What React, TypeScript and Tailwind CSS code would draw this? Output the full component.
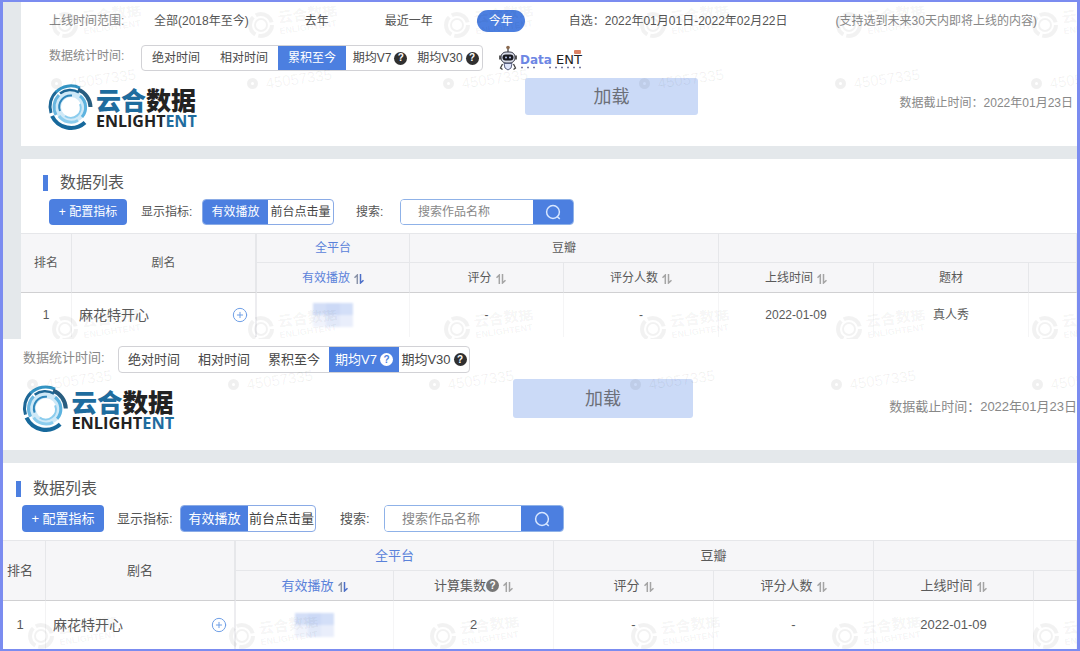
import { useState } from "react";
import { CirclePlus } from "lucide-react";

type Size = "sm" | "lg";

interface Column {
  label: string;
  width: string;
  value: string;
  active?: boolean;
  help?: boolean;
  sortable?: boolean;
  masked?: boolean;
}

interface Group {
  label: string;
  span: number;
  active?: boolean;
}

const RANGES = ["全部(2018年至今)", "去年", "最近一年", "今年"];

const PERIODS = [
  { label: "绝对时间", help: false },
  { label: "相对时间", help: false },
  { label: "累积至今", help: false },
  { label: "期均V7", help: true },
  { label: "期均V30", help: true },
];

const METRICS = ["有效播放", "前台点击量"];

const TOTAL_GROUPS: Group[] = [
  { label: "全平台", span: 1, active: true },
  { label: "豆瓣", span: 2 },
  { label: "", span: 3 },
];

const TOTAL_COLUMNS: Column[] = [
  { label: "有效播放", width: "w-[153px]", value: "", active: true, sortable: true, masked: true },
  { label: "评分", width: "w-[154px]", value: "-", sortable: true },
  { label: "评分人数", width: "w-[155px]", value: "-", sortable: true },
  { label: "上线时间", width: "w-[155px]", value: "2022-01-09", sortable: true },
  { label: "题材", width: "w-[155px]", value: "真人秀" },
  { label: "", width: "", value: "" },
];

const AVERAGE_GROUPS: Group[] = [
  { label: "全平台", span: 2, active: true },
  { label: "豆瓣", span: 2 },
  { label: "", span: 2 },
];

const AVERAGE_COLUMNS: Column[] = [
  { label: "有效播放", width: "w-[158px]", value: "", active: true, sortable: true, masked: true },
  { label: "计算集数", width: "w-[160px]", value: "2", help: true, sortable: true },
  { label: "评分", width: "w-[160px]", value: "-", sortable: true },
  { label: "评分人数", width: "w-[160px]", value: "-", sortable: true },
  { label: "上线时间", width: "w-[160px]", value: "2022-01-09", sortable: true },
  { label: "", width: "", value: "" },
];

function HelpDot({ tone }: { tone: "dark" | "light" | "gray" }) {
  const map = {
    dark: "bg-[#303030] text-white",
    light: "bg-white text-[#4c7fe0]",
    gray: "bg-[#777] text-white",
  };
  return (
    <span className={`inline-flex h-[13px] w-[13px] shrink-0 items-center justify-center rounded-full text-[10px] leading-none font-bold ${map[tone]}`}>
      ?
    </span>
  );
}

function SortIcon({ active }: { active?: boolean }) {
  return (
    <svg className="mt-0.5 h-[10px] w-[10px] shrink-0" viewBox="0 0 10 10" fill="none" strokeWidth="1.5">
      <path d="M.5 3.8 3.3 1V10" stroke={active ? "#8a93a8" : "#a5a5a5"} />
      <path d="M6.5 0V9L9.5 6.2" stroke={active ? "#4c6fc8" : "#a5a5a5"} />
    </svg>
  );
}

function BrandLogo({ className }: { className: string }) {
  return (
    <svg className={`shrink-0 overflow-visible ${className}`} viewBox="0 0 147 47" role="img" aria-label="云合数据 ENLIGHTENT">
      <g fill="none">
        <circle cx="22" cy="23" r="13" stroke="#cfe9f7" strokeWidth="6" />
        <path d="M7.5 7.5A21 21 0 0 0 2 29" stroke="#1d6796" strokeWidth="3" />
        <path d="M3 32A21 21 0 0 0 36 38.5" stroke="#17699c" strokeWidth="4" />
        <path d="M7 8A21 21 0 0 1 31 4" stroke="#3394c4" strokeWidth="3" />
        <path d="M29 5.5A19.5 19.5 0 0 1 41.5 23" stroke="#285d80" strokeWidth="4" />
        <path d="M10 11A17 17 0 0 0 7 31" stroke="#69b6df" strokeWidth="3" />
        <path d="M11 9.5A17 17 0 0 1 30 8.5" stroke="#1d6796" strokeWidth="2.5" />
        <path d="M31 12A14.5 14.5 0 0 1 33 33" stroke="#5db3df" strokeWidth="3" />
        <path d="M10 32A15 15 0 0 0 29 36.5" stroke="#8ccdee" strokeWidth="3" />
        <path d="M11 27A11.5 11.5 0 0 1 23 11.5" stroke="#2e86bb" strokeWidth="2" />
        <path d="M31 20A10 10 0 0 1 16 32" stroke="#8ccdee" strokeWidth="2" />
      </g>
      <text x="47" y="26" className="font-['Noto_Sans_CJK_SC',sans-serif] text-[25px] font-black" fill="#1f6c9e">
        云合<tspan fill="#222">数据</tspan>
      </text>
      <text x="47" y="43" className="font-['Open_Sans',sans-serif] text-[16px] font-bold" fill="#222">
        ENLIGHT<tspan fill="#1f6c9e">ENT</tspan>
      </text>
    </svg>
  );
}

function DataEntLogo() {
  return (
    <svg className="ml-4 h-[26px] w-[86px] shrink-0" viewBox="0 0 86 26" role="img" aria-label="Data ENT">
      <path d="M9 3v5" stroke="#333" strokeWidth="1.2" />
      <circle cx="9" cy="2.5" r="1.8" fill="#8b6a50" />
      <rect x="2" y="7" width="14" height="11" rx="5" fill="#d7dbe8" stroke="#3a3d4a" />
      <rect x="3.5" y="9.5" width="11" height="6" rx="3" fill="#17191f" />
      <circle cx="7" cy="12.5" r="1" fill="#b9c6ef" />
      <circle cx="11" cy="12.5" r="1" fill="#b9c6ef" />
      <path d="M1 10.5v4M17 10.5v4" stroke="#333" strokeWidth="1.6" />
      <path d="M5 18.5h8l-1 4.5-3 2-3-2z" fill="#dfe6fa" stroke="#596080" />
      <path d="M3.5 19 1.5 23l2 1.5M14.5 19l2 4-2 1.5" fill="none" stroke="#444" strokeWidth="1.3" />
      <text x="21" y="19" className="font-['DejaVu_Sans',sans-serif] text-[12px] font-bold" fill="#6d86e4">Data</text>
      <text x="57" y="19" className="font-['DejaVu_Sans',sans-serif] text-[13px]" fill="#222">ENT</text>
      <rect x="75" y="5" width="7" height="4" rx="1" fill="#dd8264" />
      <path d="M22 22.5h18M50 22.5h32" stroke="#7779a0" strokeWidth="1.5" strokeDasharray="2 4" />
    </svg>
  );
}

function LogoMark({ size }: { size: Size }) {
  return (
    <div className={`flex shrink-0 items-center text-black/5 ${size === "sm" ? "w-[196px]" : "w-[201px]"}`}>
      <svg className="h-7 w-7" viewBox="0 0 28 28" fill="none" stroke="currentColor">
        <circle cx="14" cy="14" r="11" strokeWidth="4" strokeDasharray="20 3" />
        <circle cx="14" cy="14" r="6" strokeWidth="2" />
      </svg>
      <div className="ml-1 -rotate-8 pb-3 leading-none font-bold">
        <p className="text-[15px] leading-4">云合数据</p>
        <p className="text-[9px] leading-[10px]">ENLIGHTENT</p>
      </div>
    </div>
  );
}

function NumberMark({ size }: { size: Size }) {
  return (
    <div className={`flex shrink-0 items-center gap-2 text-black/6 ${size === "sm" ? "w-[196px]" : "w-[201px]"}`}>
      <span className="h-[11px] w-[11px] rounded-full border-4 border-current" />
      <span className="-rotate-8 pb-2 text-[15px]">45057335</span>
    </div>
  );
}

function WatermarkRow({ kind, size, className }: { kind: "logo" | "number"; size: Size; className: string }) {
  return (
    <div aria-hidden="true" className={`pointer-events-none absolute right-0 flex overflow-hidden select-none ${className}`}>
      {[0, 1, 2, 3, 4, 5].map((i) =>
        kind === "logo" ? <LogoMark key={i} size={size} /> : <NumberMark key={i} size={size} />
      )}
    </div>
  );
}

function PeriodPicker({ size, initial, children }: { size: Size; initial: string; children?: React.ReactNode }) {
  const [period, setPeriod] = useState(initial);
  const sm = size === "sm";
  return (
    <div className={`flex items-center ${sm ? "h-[26px] text-xs" : "h-[27px] text-[13px]"}`}>
      <span className={`shrink-0 pb-1 text-[#888] ${sm ? "w-[92px]" : "w-[95px]"}`}>数据统计时间:</span>
      <div className="flex h-full overflow-hidden rounded-[4px] border border-[#d2d2d6]">
        {PERIODS.map((p) => {
          const on = p.label === period;
          return (
            <button
              key={p.label}
              type="button"
              aria-pressed={on}
              onClick={() => setPeriod(p.label)}
              className={`flex items-center justify-center gap-[3px] whitespace-nowrap ${sm ? "w-[68px]" : "w-[70px]"} ${on ? "bg-[#4c7fe0] text-white" : "text-[#484848]"}`}
            >
              {p.label}
              {p.help && <HelpDot tone={on ? "light" : "dark"} />}
            </button>
          );
        })}
      </div>
      {children}
    </div>
  );
}

function Toolbar({ size }: { size: Size }) {
  const [metric, setMetric] = useState(METRICS[0]);
  const sm = size === "sm";
  const inputId = `search-${size}`;
  return (
    <div className={`flex items-center text-[#555] ${sm ? "h-[26px] pl-7 text-xs" : "h-[27px] pl-[19px] text-[13px]"}`}>
      <button type="button" className={`h-full shrink-0 rounded-[4px] bg-[#4c7fe0] text-white ${sm ? "w-[78px]" : "w-[82px]"}`}>
        + 配置指标
      </button>
      <span className={`shrink-0 ${sm ? "ml-3.5 w-[61px]" : "ml-[13px] w-[63px]"}`}>显示指标:</span>
      <div className="flex h-full overflow-hidden rounded-[4px] border border-[#8aabe6]">
        {METRICS.map((m) => (
          <button
            key={m}
            type="button"
            aria-pressed={m === metric}
            onClick={() => setMetric(m)}
            className={`whitespace-nowrap ${sm ? "w-[65px]" : "w-[67px]"} ${m === metric ? "bg-[#4c7fe0] text-white" : "text-[#444]"}`}
          >
            {m}
          </button>
        ))}
      </div>
      <label htmlFor={inputId} className={`shrink-0 ${sm ? "ml-[22px] w-11" : "ml-6 w-11"}`}>
        搜索:
      </label>
      <div className="flex h-full overflow-hidden rounded-[4px] border border-[#8fb2e8]">
        <input
          id={inputId}
          type="text"
          placeholder="搜索作品名称"
          className={`bg-white pl-[17px] outline-none placeholder:text-[#888] ${sm ? "w-[132px]" : "w-[136px]"}`}
        />
        <button type="button" aria-label="搜索" className={`flex items-center justify-center bg-[#4c7fe0] ${sm ? "w-10" : "w-[42px]"}`}>
          <svg className="h-4 w-4" viewBox="0 0 16 16" fill="none" stroke="#d7e6ff" strokeWidth="1.5">
            <circle cx="8" cy="8" r="6.4" />
            <path d="m12 12.5 2.8 2.3" />
          </svg>
        </button>
      </div>
    </div>
  );
}

function DataTable({ size, groups, columns }: { size: Size; groups: Group[]; columns: Column[] }) {
  const sm = size === "sm";
  const head = "border-r border-b border-[#e6e7ea] p-0 font-normal";
  const rankPad = sm ? "p-0" : "p-0 pr-2";
  return (
    <table className={`w-full table-fixed border-separate border-spacing-0 text-center text-[#5a5a5a] ${sm ? "text-xs" : "text-[13px]"}`}>
      <colgroup>
        <col className={sm ? "w-[51px]" : "w-[43px]"} />
        <col className={sm ? "w-[185px]" : "w-[190px]"} />
        {columns.map((c, i) => (
          <col key={i} className={c.width} />
        ))}
      </colgroup>
      <thead className="bg-[#f6f6f8]">
        <tr className={sm ? "h-[30px]" : "h-[31px]"}>
          <th rowSpan={2} className={`border-t border-r border-b border-[#e6e7ea] border-b-[#d0d0d2] font-normal whitespace-nowrap ${rankPad}`}>排名</th>
          <th rowSpan={2} className="border-t border-r-2 border-b border-[#e6e7ea] border-b-[#d0d0d2] p-0 font-normal">剧名</th>
          {groups.map((g, i) => (
            <th key={i} colSpan={g.span} className={`border-t ${head} ${g.active ? "text-[#5a82da]" : ""}`}>
              {g.label}
            </th>
          ))}
        </tr>
        <tr className="h-[30px]">
          {columns.map((c, i) => (
            <th key={i} className={`${head} border-b-[#d0d0d2] ${c.active ? "text-[#5a82da]" : ""}`}>
              <span className="flex items-center justify-center gap-1">
                <span className="flex items-center">
                  {c.label}
                  {c.help && <HelpDot tone="gray" />}
                </span>
                {c.sortable && <SortIcon active={c.active} />}
              </span>
            </th>
          ))}
        </tr>
      </thead>
      <tbody>
        <tr className={sm ? "h-11" : "h-12"}>
          <td className={`border-r border-[#f3f3f4] ${rankPad}`}>1</td>
          <td className="border-r-2 border-[#ededf0] py-0 pr-[7px] pl-[7px]">
            <span className="flex items-center justify-between text-sm">
              麻花特开心
              <button type="button" aria-label="添加">
                <CirclePlus size={16} strokeWidth={1.5} color="#6f9fe6" />
              </button>
            </span>
          </td>
          {columns.map((c, i) => (
            <td key={i} className="border-r border-[#f5f5f6] p-0">
              {c.masked ? (
                <span className="mx-auto grid w-10 grid-cols-3 blur-[1px]">
                  <span className="h-3 bg-[#d3def7]" />
                  <span className="h-3 bg-[#ccd9f6]" />
                  <span className="h-3 bg-[#d3dff8]" />
                  <span className="h-3 bg-[#f0f3fc]" />
                  <span className="h-3 bg-[#e2e9f9]" />
                  <span className="h-3 bg-[#e9eefb]" />
                </span>
              ) : (
                c.value
              )}
            </td>
          ))}
        </tr>
      </tbody>
    </table>
  );
}

function ListTitle({ size }: { size: Size }) {
  const sm = size === "sm";
  return (
    <h2 className={`flex h-6 items-center gap-3 text-[#555] ${sm ? "pl-[22px]" : "pl-[13px]"} text-base`}>
      <span className="h-4 w-[5px] bg-[#4c7fe0]" />
      数据列表
    </h2>
  );
}

export default function App() {
  const [range, setRange] = useState("今年");

  return (
    <div className="overflow-hidden border-x-[3px] border-y-2 border-[#7b8cf0] bg-white font-['Liberation_Sans','Noto_Sans_CJK_SC',sans-serif]">
      {/* 累积至今 */}
      <section className="relative overflow-hidden bg-[#e4e8eb] pl-[18px]">
        <div className="h-36 bg-white pt-2 pl-7">
          <div className="flex h-[22px] items-center gap-8 text-xs whitespace-nowrap text-[#555]">
            <span className="w-[61px] shrink-0 text-[#888]">上线时间范围:</span>
            {RANGES.map((r) => (
              <button
                key={r}
                type="button"
                aria-pressed={r === range}
                onClick={() => setRange(r)}
                className={`h-full shrink-0 rounded-full px-3 ${r === range ? "bg-[#4c7fe0] text-white" : ""}`}
              >
                {r}
              </button>
            ))}
            <span className="shrink-0 px-3">自选：2022年01月01日-2022年02月22日</span>
            <span className="shrink-0 pl-1 text-[#888]">(支持选到未来30天内即将上线的内容)</span>
          </div>
          <div className="pt-[13px]">
            <PeriodPicker size="sm" initial="累积至今">
              <DataEntLogo />
            </PeriodPicker>
          </div>
          <div className="flex items-start pt-[7px]">
            <BrandLogo className="mt-1.5 h-[47px] w-[147px]" />
            <button type="button" className="ml-[329px] h-[37px] w-[173px] shrink-0 rounded-[3px] bg-[#cbdaf7] text-lg text-[#6b6f78]">
              加载
            </button>
            <p className="ml-auto pt-[17px] pr-1 text-xs whitespace-nowrap text-[#888]">数据截止时间：2022年01月23日</p>
          </div>
        </div>
        <div className="mt-[13px] bg-white pt-3 pb-0.5">
          <ListTitle size="sm" />
          <div className="pt-1 pb-2">
            <Toolbar size="sm" />
          </div>
          <DataTable size="sm" groups={TOTAL_GROUPS} columns={TOTAL_COLUMNS} />
        </div>
        <WatermarkRow kind="logo" size="sm" className="top-1 left-12" />
        <WatermarkRow kind="number" size="sm" className="top-[66px] left-12" />
        <WatermarkRow kind="logo" size="sm" className="top-[308px] left-12" />
      </section>

      {/* 期均V7 */}
      <section className="relative overflow-hidden bg-[#e4e8eb]">
        <div className="h-[111px] overflow-hidden bg-white pt-[7px] pl-5">
          <PeriodPicker size="lg" initial="期均V7" />
          <div className="flex items-start pt-1.5">
            <BrandLogo className="mt-1.5 h-12 w-[151px]" />
            <button type="button" className="ml-[339px] h-[39px] w-[180px] shrink-0 rounded-[3px] bg-[#cbdaf7] text-lg text-[#6b6f78]">
              加载
            </button>
            <p className="ml-auto pt-[18px] text-[13px] whitespace-nowrap text-[#888]">数据截止时间：2022年01月23日</p>
          </div>
        </div>
        <div className="mt-[13px] bg-white pt-3.5">
          <ListTitle size="lg" />
          <div className="pt-1 pb-2">
            <Toolbar size="lg" />
          </div>
          <DataTable size="lg" groups={AVERAGE_GROUPS} columns={AVERAGE_COLUMNS} />
        </div>
        <WatermarkRow kind="number" size="lg" className="top-[30px] left-6" />
        <WatermarkRow kind="logo" size="lg" className="top-[278px] left-6" />
      </section>
    </div>
  );
}
